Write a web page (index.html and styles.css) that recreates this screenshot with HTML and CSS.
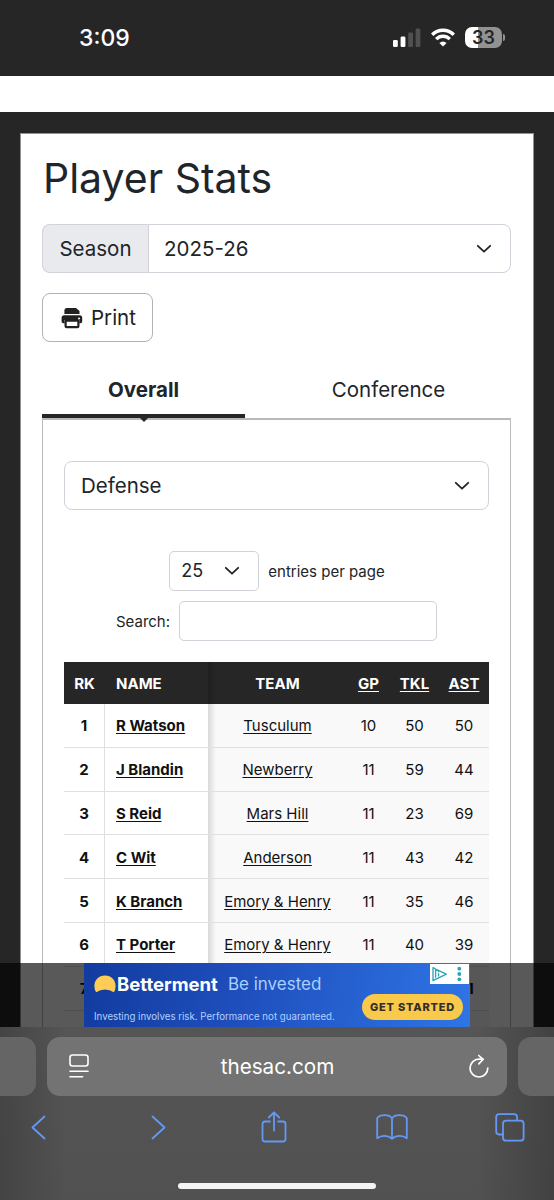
FILE: index.html
```html
<!doctype html>
<html lang="en">
<head>
	<meta charset="UTF-8">
	<title>Player Stats</title>
	<link rel="stylesheet" href="styles.css">
</head>
<body>
	<div class="status">
		<span class="time">3:09</span>
		<div class="status-icons">
			<svg class="signal" width="28" height="19" viewBox="0 0 28 19">
				<rect x="0" y="12" width="4.8" height="7" rx="1.3" fill="#fff"/>
				<rect x="7.6" y="8.5" width="4.8" height="10.5" rx="1.3" fill="#fff"/>
				<rect x="15.2" y="4.5" width="4.8" height="14.5" rx="1.3" fill="#505050"/>
				<rect x="22.6" y="0.5" width="4.8" height="18.5" rx="1.3" fill="#505050"/>
			</svg>
			<svg class="wifi" width="24" height="19" viewBox="0 0 24 19" fill="none" stroke="#fff" stroke-width="3.4">
				<path d="M1.2 6.8C7.3 .7 16.7 .7 22.8 6.8"/>
				<path d="M5.2 11.1C9 7.3 15 7.3 18.8 11.1"/>
				<path d="M12 18.6L8.4 15Q12 11.9 15.6 15Z" fill="#fff" stroke="none"/>
			</svg>
			<div class="battery"><span>33</span></div>
		</div>
	</div>
	<div class="strip"></div>
	<div class="page">
		<div class="card">
			<h1>Player Stats</h1>
			<div class="season">
				<span class="season-label">Season</span>
				<div class="select">2025-26
					<svg class="chevron" width="16" height="10" viewBox="0 0 16 10"><path d="M1.8 1.8L8 7.7L14.2 1.8"/></svg>
				</div>
			</div>
			<a class="print">
				<svg width="22" height="22" viewBox="0 0 22 22">
					<path d="M3.4 7V3.5Q3.4 1 5.9 1H15L18.5 4V7Z" fill="#212121"/>
					<path d="M3.2 8.2H18.6Q21.2 8.2 21.2 11V14.5Q21.2 16.2 19.5 16.2H18.3V13H3.6V16.2H2.3Q.6 16.2 .6 14.5V11Q.6 8.2 3.2 8.2Z" fill="#212121"/>
					<rect x="4.6" y="13.6" width="12.8" height="6.6" rx="1" fill="#fff" stroke="#212121" stroke-width="2.2"/>
					<circle cx="18" cy="11.4" r="1" fill="#fff"/>
				</svg>
				Print
			</a>
			<div class="tabs">
				<a class="tab active">Overall</a>
				<a class="tab">Conference</a>
			</div>
			<div class="panel">
				<div class="select category">Defense
					<svg class="chevron" width="16" height="10" viewBox="0 0 16 10"><path d="M1.8 1.8L8 7.7L14.2 1.8"/></svg>
				</div>
				<div class="entries">
					<div class="select length">25
						<svg class="chevron" width="16" height="10" viewBox="0 0 16 10"><path d="M1.8 1.8L8 7.7L14.2 1.8"/></svg>
					</div>
					<span>entries per page</span>
				</div>
				<div class="search">
					<label for="search">Search:</label>
					<input type="text" id="search">
				</div>
				<table>
					<colgroup><col class="c-rk"><col class="c-name"><col class="c-team"><col class="c-gp"><col class="c-tkl"><col class="c-ast"></colgroup>
					<thead>
						<tr><th>RK</th><th class="name">NAME</th><th>TEAM</th><th><u>GP</u></th><th><u>TKL</u></th><th><u>AST</u></th></tr>
					</thead>
					<tbody>
						<tr><td class="rk">1</td><td class="name"><u>R Watson</u></td><td><u>Tusculum</u></td><td>10</td><td>50</td><td>50</td></tr>
						<tr><td class="rk">2</td><td class="name"><u>J Blandin</u></td><td><u>Newberry</u></td><td>11</td><td>59</td><td>44</td></tr>
						<tr><td class="rk">3</td><td class="name"><u>S Reid</u></td><td><u>Mars Hill</u></td><td>11</td><td>23</td><td>69</td></tr>
						<tr><td class="rk">4</td><td class="name"><u>C Wit</u></td><td><u>Anderson</u></td><td>11</td><td>43</td><td>42</td></tr>
						<tr><td class="rk">5</td><td class="name"><u>K Branch</u></td><td><u>Emory &amp; Henry</u></td><td>11</td><td>35</td><td>46</td></tr>
						<tr><td class="rk">6</td><td class="name"><u>T Porter</u></td><td><u>Emory &amp; Henry</u></td><td>11</td><td>40</td><td>39</td></tr>
						<tr><td class="rk">7</td><td class="name"></td><td></td><td></td><td></td><td class="last">1</td></tr>
						<tr><td class="rk"></td><td class="name"></td><td></td><td></td><td></td><td></td></tr>
					</tbody>
				</table>
			</div>
		</div>
		<div class="ad-bar">
			<div class="ad">
				<div class="ad-copy">
					<div class="ad-title">
						<svg width="22" height="18" viewBox="0 0 22 18"><path d="M2.2 17.3Q.4 14.7 .4 11.2C.4 4.8 4.8.6 11 .6S21.6 4.8 21.6 11.2Q21.6 14.7 19.8 17.3Q15.7 14.4 11 14.4T2.2 17.3Z" fill="#fc5"/></svg>
						<b>Betterment</b>
						<span>Be invested</span>
					</div>
					<p>Investing involves risk. Performance not guaranteed.</p>
				</div>
				<a class="cta">GET STARTED</a>
				<svg class="adchoices" width="39" height="20" viewBox="0 0 39 20">
					<rect width="39" height="20" fill="#fff"/>
					<path d="M5.6 13.8V5.2L16.3 10.2L3 16.6V3.6L5.6 5" fill="none" stroke="#2aa3b7" stroke-width="1.3" stroke-linejoin="round"/>
					<path d="M8.6 9.2V12.6M8.6 7V8.2" stroke="#2aa3b7" stroke-width="1.3"/>
					<g fill="#2aa3b7"><circle cx="29.3" cy="4.7" r="1.9"/><circle cx="29.3" cy="10" r="1.9"/><circle cx="29.3" cy="15.3" r="1.9"/></g>
				</svg>
			</div>
		</div>
	</div>
	<div class="browser">
		<div class="address-row">
			<div class="peek left"></div>
			<div class="address">
				<svg width="20" height="25" viewBox="0 0 20 25" fill="none" stroke="#fff" stroke-width="1.6" stroke-linecap="round">
					<rect x="1" y="1" width="18" height="11" rx="2.5"/>
					<path d="M1 17.3H19M1 22.8H13.6"/>
				</svg>
				<span>thesac.com</span>
				<svg width="20" height="25" viewBox="0 0 20 25" fill="none" stroke="#fff" stroke-width="1.7" stroke-linecap="round" stroke-linejoin="round">
					<path d="M18.8 14A8.9 8.9 0 1 1 9.9 5.2H14"/>
					<path d="M9.8 1.5L14 5.4L9.8 9.8"/>
				</svg>
			</div>
			<div class="peek right"></div>
		</div>
		<div class="toolbar">
			<svg width="15" height="25" viewBox="0 0 15 25"><path d="M13.5 1.5L1.5 12.5L13.5 23.5"/></svg>
			<svg class="forward" width="15" height="25" viewBox="0 0 15 25"><path d="M1.5 1.5L13.5 12.5L1.5 23.5"/></svg>
			<svg width="26" height="32" viewBox="0 0 26 32"><path d="M9 10.5H4Q1.5 10.5 1.5 13V28Q1.5 30.5 4 30.5H22Q24.5 30.5 24.5 28V13Q24.5 10.5 22 10.5H17M13 19.5V1.5M7.8 6.5L13 1.3L18.2 6.5"/></svg>
			<svg width="32" height="26" viewBox="0 0 32 26"><path d="M16 4.2C13 .3 4.5.2 1.2 4V24.2C5.5 20.8 12 21.2 16 24.7C20 21.2 26.5 20.8 30.8 24.2V4C27.5.2 19 .3 16 4.2V24.5"/></svg>
			<svg width="30" height="29" viewBox="0 0 30 29"><path d="M7.8 21.5H4Q1.2 21.5 1.2 18.5V4Q1.2 1.2 4 1.2H19Q22 1.2 22 4V7.5"/><rect x="8" y="7.7" width="20.6" height="20" rx="3"/></svg>
		</div>
		<div class="home"></div>
	</div>
</body>
</html>
```
FILE: styles.css
```css
*{
	box-sizing: border-box;
}
body,h1,p{
	margin: 0;
}
body{
	width: 554px;
	height: 1200px;
	display: flex;
	flex-direction: column;
	overflow: hidden;
	background: #262626;
	color: #212429;
	font: 20.5px/32px Inter, "Liberation Sans", sans-serif;
}
svg{
	display: block;
	flex: none;
}
.status{
	height: 76px;
	flex: none;
	display: flex;
	justify-content: space-between;
	padding: 28px 49px 0 79px;
	color: #fff;
}
.time{
	font-size: 23px;
	line-height: 20px;
	font-weight: 500;
}
.status-icons{
	display: flex;
	gap: 10px;
}
.battery{
	width: 37px;
	height: 21px;
	margin: -1px 3px 0 0;
	border-radius: 7px;
	background: linear-gradient(90deg, #fff 34%, #929292 34%);
	color: #262626;
	font-size: 18px;
	line-height: 21px;
	font-weight: 600;
	text-align: center;
	position: relative;
}
.battery:after{
	content: "";
	position: absolute;
	right: -3px;
	top: 7px;
	width: 2px;
	height: 7px;
	border-radius: 0 3px 3px 0;
	background: #929292;
}
.strip{
	height: 36px;
	flex: none;
	background: #fff;
}
.page{
	height: 915px;
	flex: none;
	padding: 21px 20px 0;
	overflow: hidden;
	position: relative;
}
.card{
	width: 514px;
	height: 960px;
	padding: 19px 22px 0 21px;
	border: 1px solid #929292;
	background: #fff;
}
h1{
	padding-left: 1px;
	font-size: 41px;
	line-height: 50px;
	font-weight: 400;
}
.season{
	display: flex;
	margin-top: 21px;
}
.season-label{
	width: 106px;
	height: 49px;
	border: 1px solid #d0d1d9;
	border-right: 0;
	border-radius: 8px 0 0 8px;
	background: #e9eaee;
	line-height: 47px;
	text-align: center;
}
.select{
	flex: 1;
	display: flex;
	align-items: center;
	justify-content: space-between;
	height: 49px;
	padding: 0 18px 0 16px;
	border: 1px solid #d0d1d9;
	border-radius: 8px;
	background: #fff;
}
.season .select{
	padding-left: 15px;
	border-left-color: #d0d1d9;
	border-radius: 0 8px 8px 0;
}
.chevron{
	fill: none;
	stroke: #212429;
	stroke-width: 1.8;
	stroke-linecap: round;
	stroke-linejoin: round;
}
.print{
	display: flex;
	align-items: center;
	gap: 8px;
	width: 111px;
	height: 49px;
	margin-top: 20px;
	padding: 1px 0 0 18px;
	border: 1px solid #b2b2b2;
	border-radius: 8px;
	color: #212121;
}
.tabs{
	display: flex;
	height: 76px;
}
.tab{
	width: 203px;
	padding-top: 32px;
	border-bottom: 4px solid transparent;
	text-align: center;
	position: relative;
}
.tab + .tab{
	flex: 1;
	padding-left: 21px;
	border-bottom: 0;
}
.tab.active{
	border-color: #262626;
	font-weight: 700;
}
.active:after{
	content: "";
	position: absolute;
	left: 97px;
	bottom: -8px;
	border: 5px solid transparent;
	border-top-color: #262626;
	border-bottom: 0;
}
.panel{
	height: 700px;
	padding: 41px 21px 0;
	border: 1px solid #b7b9bc;
	border-top-width: 2px;
}
.category{
	width: 425px;
}
.entries,.search{
	display: flex;
	align-items: center;
	justify-content: center;
	gap: 9px;
	height: 40px;
	font-size: 15px;
}
.entries{
	margin-top: 41px;
	padding-left: 1px;
}
.entries span,.search label{
	padding-top: 2px;
}
.search{
	margin-top: 10px;
}
.length{
	flex: none;
	width: 90px;
	height: 40px;
	padding: 0 18px 0 11px;
	border-radius: 5px;
	font-size: 18px;
}
.search input{
	width: 258px;
	height: 40px;
	border: 1px solid #d0d1d9;
	border-radius: 5px;
}
table{
	width: 425px;
	margin-top: 21px;
	table-layout: fixed;
	border-collapse: separate;
	border-spacing: 0;
	font-size: 15px;
	line-height: 20px;
	color: #111;
}
.c-rk{ width: 41px; }
.c-name{ width: 103px; }
.c-team{ width: 139px; }
.c-gp{ width: 43px; }
.c-tkl{ width: 49px; }
.c-ast{ width: 50px; }
th,td{
	padding: 2px 0 0;
	text-align: center;
}
th{
	height: 42px;
	background: #262626;
	color: #fff;
	font-weight: 700;
}
td{
	height: 43.8px;
	border-bottom: 1px solid #dedfe3;
	background: #f9f9fa;
}
td.rk,td.name{
	background: #fff;
	font-weight: 700;
}
td.rk{
	border-right: 1px solid #dedfe3;
}
.name{
	padding-left: 11px;
	text-align: left;
}
td.name + td{
	background: linear-gradient(90deg, #d9d9db, #f9f9fa 8px);
}
th.name + th{
	background: linear-gradient(90deg, #1f1f1f, #262626 8px);
}
u{
	text-underline-offset: 2px;
}
td.last{
	padding-left: 13px;
	font-weight: 700;
}
.ad-bar{
	position: absolute;
	left: 0;
	right: 0;
	bottom: 0;
	height: 64px;
	padding-left: 84px;
	background: rgba(0,0,0,.65);
}
.ad{
	display: flex;
	width: 386px;
	height: 64px;
	padding: 9px 7px 0 10px;
	background: linear-gradient(100deg, #123b9e, #2051c0 45%, #2f75e5);
	position: relative;
}
.ad-copy{
	width: 268px;
	white-space: nowrap;
}
.ad-title{
	display: flex;
	align-items: center;
	height: 23px;
	font-size: 17px;
	color: #a9d0ff;
}
.ad-title b{
	margin: 0 10px 0 1px;
	color: #fff;
	font-size: 18.5px;
}
.ad p{
	margin-top: 12px;
	color: #b0d1ff;
	font-size: 9.7px;
	line-height: 20px;
}
.cta{
	width: 101px;
	height: 26px;
	margin-top: 22px;
	border-radius: 13px;
	background: #f8c94b;
	color: #342d28;
	font-size: 11px;
	line-height: 26px;
	font-weight: 800;
	letter-spacing: .8px;
	text-align: center;
}
.adchoices{
	position: absolute;
	right: 1px;
	top: 1px;
}
.browser{
	height: 173px;
	flex: none;
	padding-top: 10px;
	background: linear-gradient(90deg, #444 0, transparent 12%, transparent 86%, #424242), linear-gradient(#555, #515152);
}
.address-row{
	display: flex;
	gap: 11px;
}
.peek,.address{
	height: 59px;
	background: #737373;
}
.peek{
	width: 36px;
	background: #656565;
}
.left{
	border-radius: 0 13px 13px 0;
}
.right{
	border-radius: 13px 0 0 13px;
}
.address{
	width: 461px;
	display: flex;
	align-items: center;
	justify-content: space-between;
	padding: 0 18px 0 22px;
	border-radius: 13px;
	color: #fff;
}
.address span{
	margin-right: 3px;
	font-size: 20.7px;
}
.toolbar{
	display: grid;
	grid-template-columns: repeat(5, 118px);
	align-items: center;
	justify-content: center;
	justify-items: center;
	height: 34px;
	margin-top: 14px;
	padding-right: 6px;
}
.toolbar svg{
	fill: none;
	stroke: #6598f5;
	stroke-width: 1.8;
	stroke-linecap: round;
	stroke-linejoin: round;
}
.toolbar .forward{
	margin-left: 5px;
}
.home{
	width: 198px;
	height: 6px;
	margin: 39px auto 0;
	border-radius: 3px;
	background: #f3f3f3;
}
```
